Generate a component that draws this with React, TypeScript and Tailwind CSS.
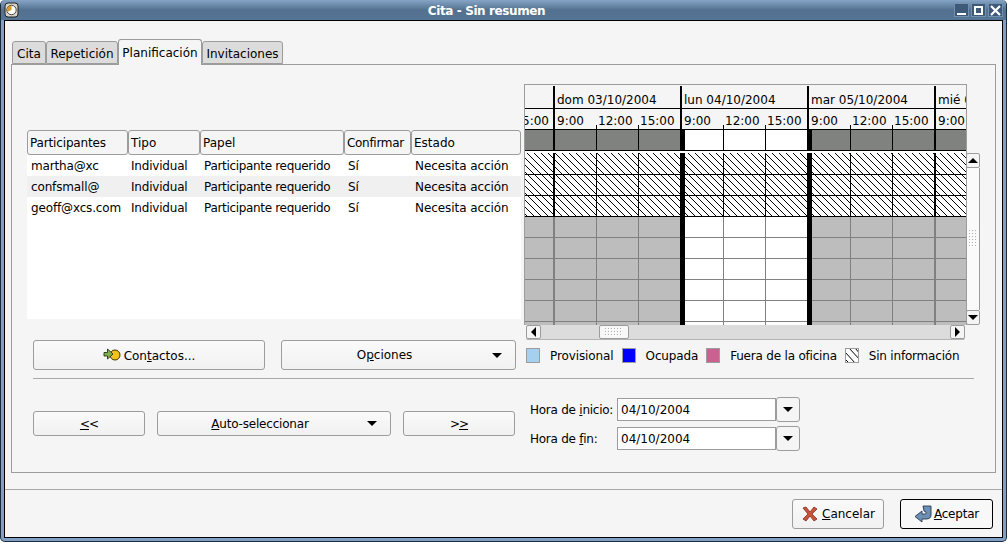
const rows = [
  { name: "martha@xc", bg: "bg-white" },
  { name: "confsmall@", bg: "bg-[#f0f0f0]" },
  { name: "geoff@xcs.com", bg: "bg-white" },
];

const Arrow = ({ dir = "down" }: { dir?: "down" | "up" | "left" | "right" }) => {
  const points = {
    down: "0,0 10,0 5,5",
    up: "0,5 10,5 5,0",
    left: "5,0 5,10 0,5",
    right: "0,0 0,10 5,5",
  }[dir];
  const vertical = dir === "down" || dir === "up";
  return (
    <svg width={vertical ? 10 : 5} height={vertical ? 5 : 10} className="shrink-0">
      <polygon points={points} fill="#000" />
    </svg>
  );
};

const Dots = ({ vertical = false }: { vertical?: boolean }) => (
  <svg width={vertical ? 8 : 18} height={vertical ? 18 : 8}>
    <defs>
      <pattern id={vertical ? "dv" : "dh"} width="3" height="3" patternUnits="userSpaceOnUse">
        <rect x="0" y="0" width="1" height="1" fill="#b0b0b0" />
        <rect x="1" y="1" width="1" height="1" fill="#ffffff" />
      </pattern>
    </defs>
    <rect width="100%" height="100%" fill={`url(#${vertical ? "dv" : "dh"})`} />
  </svg>
);

const Button = ({ className, children }: { className: string; children: React.ReactNode }) => (
  <div
    className={`flex items-center rounded-[3px] border border-[#9c9c9c] bg-gradient-to-b from-[#fafafa] to-[#f1f1f1] ${className}`}
  >
    {children}
  </div>
);

// chart body below the two header rows
const GanttBody = () => {
  const hourLines = [596, 638, 723, 765, 850, 892].map((x) => x - 525);
  const rowsY = [237, 258, 279, 300, 321].map((y) => y - 130);
  return (
    <svg width="441" height="195" className="block">
      <defs>
        <pattern id="hatch" width="7" height="7" patternUnits="userSpaceOnUse">
          <g fill="#000">
            {[0, 1, 2, 3, 4, 5, 6].map((i) => (
              <rect key={i} x={i} y={i} width="1" height="1" />
            ))}
          </g>
        </pattern>
      </defs>
      <rect width="441" height="195" fill="#fff" />
      {/* busy row */}
      <rect x="0" y="0" width="157" height="20" fill="#7f827e" />
      <rect x="282" y="0" width="159" height="20" fill="#7f827e" />
      <rect x="0" y="20" width="441" height="1" fill="#000" />
      {/* out of range */}
      <rect x="0" y="87" width="157" height="108" fill="#bdbdbd" />
      <rect x="282" y="87" width="159" height="108" fill="#bdbdbd" />
      {rowsY.map((y) => (
        <rect key={y} x="0" y={y} width="441" height="1" fill="#808080" />
      ))}
      {[28, 409].map((x) => (
        <rect key={x} x={x} y="87" width="2" height="108" fill="#808080" />
      ))}
      {hourLines.map((x) => (
        <rect key={x} x={x} y="87" width="1" height="108" fill="#808080" />
      ))}
      {/* hatched rows */}
      <rect x="0" y="23" width="441" height="64" fill="#fff" />
      <rect x="0" y="23" width="441" height="64" fill="url(#hatch)" />
      {[44, 65, 86].map((y) => (
        <rect key={y} x="0" y={y} width="441" height="1" fill="#000" />
      ))}
      {hourLines.map((x) => (
        <g key={x}>
          <rect x={x} y="0" width="1" height="21" fill="#000" />
          <rect x={x} y="23" width="1" height="64" fill="#000" />
        </g>
      ))}
      {[28, 409].map((x) => (
        <g key={x}>
          <rect x={x} y="0" width="2" height="21" fill="#000" />
          <rect x={x} y="23" width="2" height="64" fill="#000" />
        </g>
      ))}
      {[155, 282].map((x) => (
        <g key={x}>
          <rect x={x} y="0" width="5" height="21" fill="#000" />
          <rect x={x} y="23" width="5" height="172" fill="#000" />
        </g>
      ))}
    </svg>
  );
};

const HourCell = ({ label, w, tick = true }: { label: string; w: string; tick?: boolean }) => (
  <div className={`relative h-full whitespace-nowrap pl-[2px] pt-[5px] ${w}`}>
    {tick && <span className="absolute bottom-0 left-0 h-[4px] w-px bg-black" />}
    {label}
  </div>
);

const DayColumn = ({ label, wide = false }: { label: string; wide?: boolean }) => (
  <div className={`shrink-0 border-l-2 border-black ${wide ? "w-[127px]" : "w-[40px]"}`}>
    <div className="h-[23px] overflow-hidden whitespace-nowrap border-b border-black bg-[#f5f5f5] pl-[2px] pt-[7px]">
      {label}
    </div>
    <div className="flex h-[20px] overflow-hidden">
      <HourCell label="9:00" w={wide ? "w-[41px]" : "w-[31px]"} tick={false} />
      {wide && <HourCell label="12:00" w="w-[42px]" />}
      {wide && <HourCell label="15:00" w="w-[42px]" />}
    </div>
  </div>
);

const Swatch = ({ color }: { color: string }) => (
  <span className={`block h-[15px] w-[14px] border border-[#9c9c9c] ${color}`} />
);

export default function App() {
  return (
    <div className="h-[544px] w-[1007px] overflow-hidden bg-white font-['DejaVu_Sans',sans-serif] text-[12px] leading-[14px] text-black">
      <div className="flex h-[542px] flex-col overflow-hidden rounded-[5px] border border-t-0 border-[#1c2c3c] bg-[#7f9fc4]">
        {/* title bar */}
        <div className="-mx-px flex h-[20px] shrink-0 items-center bg-gradient-to-b from-[#86a4c6] via-[#53718f] to-[#557594] pl-[4px] pr-[4px]">
          <svg width="15" height="16" viewBox="0 0 15 16">
            <rect x="1" y="1" width="13" height="14" rx="3" fill="#d8d4c8" stroke="#222" />
            <circle cx="7.5" cy="8" r="4.7" fill="#fff" stroke="#444" />
            <path d="M7.5,8 L7.5,3.4 A4.6,4.6 0 0 0 3.4,10 Z" fill="#d99a20" />
          </svg>
          <div className="flex-1 pt-[1px] text-center font-bold tracking-[-0.4px] text-white">Cita - Sin resumen</div>
          <div className="flex gap-[2px]">
            <div className="flex h-[14px] w-[15px] items-end justify-center border border-[#7390ae] bg-[#3f5a78] pb-[1px]">
              <span className="block h-[2px] w-[9px] bg-white" />
            </div>
            <div className="flex h-[14px] w-[15px] items-center justify-center border border-[#7390ae] bg-[#3f5a78]">
              <span className="block h-[9px] w-[9px] border-[2px] border-white" />
            </div>
            <div className="flex h-[14px] w-[15px] items-center justify-center border border-[#7390ae] bg-[#3f5a78]">
              <svg width="11" height="11">
                <path d="M1,1 L10,10 M10,1 L1,10" stroke="#fff" strokeWidth="2.2" />
              </svg>
            </div>
          </div>
        </div>

        {/* window frame */}
        <div className="flex flex-1 flex-col px-[3px] pb-[3px]">
          <div className="flex flex-1 flex-col border border-black bg-[#f5f5f5]">
            {/* tabs */}
            <div className="ml-[7px] mr-[6px] mt-[17px] flex h-[26px] shrink-0 items-end">
              {[
                ["Cita", "w-[34px]"],
                ["Repetición", "w-[72px]"],
              ].map(([t, w]) => (
                <div
                  key={t}
                  className={`flex h-[23px] items-center justify-center rounded-t-[3px] border border-[#9c9c9c] bg-[#dcdcdc] pt-[2px] ${w}`}
                >
                  {t}
                </div>
              ))}
              <div className="z-10 -mb-px flex h-[26px] w-[84px] items-start justify-center rounded-t-[3px] border border-b-0 border-[#9c9c9c] bg-[#f5f5f5] pt-[6px]">
                Planificación
              </div>
              <div className="flex h-[23px] w-[81px] items-center justify-center rounded-t-[3px] border border-[#9c9c9c] bg-[#dcdcdc] pt-[2px]">
                Invitaciones
              </div>
            </div>

            {/* notebook panel */}
            <div className="ml-[6px] mr-[6px] h-[409px] shrink-0 border border-[#9c9c9c] pl-[15px] pt-[19px]">
              <div className="flex h-[241px] items-start">
                {/* participants */}
                <div className="mt-[46px] h-[189px] w-[494px] shrink-0 bg-white">
                  <div className="flex h-[25px] bg-[#f5f5f5]">
                    {[
                      ["Participantes", "w-[101px]", "tracking-[-0.15px]"],
                      ["Tipo", "w-[72px]", ""],
                      ["Papel", "w-[144px]", ""],
                      ["Confirmar", "w-[67px]", "tracking-[-0.3px]"],
                      ["Estado", "w-[110px]", ""],
                    ].map(([t, w, k]) => (
                      <div
                        key={t}
                        className={`flex items-center rounded-[3px] border border-[#9c9c9c] pl-[2px] ${w} ${k}`}
                      >
                        {t}
                      </div>
                    ))}
                  </div>
                  {rows.map((r) => (
                    <div key={r.name} className={`flex h-[21px] items-center ${r.bg}`}>
                      <div className="w-[100px] pl-[4px] tracking-[-0.15px]">{r.name}</div>
                      <div className="w-[73px] pl-[4px] tracking-[-0.2px]">Individual</div>
                      <div className="w-[144px] pl-[4px] tracking-[-0.32px]">Participante requerido</div>
                      <div className="w-[67px] pl-[4px]">Sí</div>
                      <div className="w-[110px] pl-[4px] tracking-[-0.07px]">Necesita acción</div>
                    </div>
                  ))}
                </div>

                {/* gantt */}
                <div className="ml-[3px] w-[443px] shrink-0 border border-b-0 border-[#9c9c9c] bg-[#f5f5f5]">
                  <div className="flex h-[45px] w-[441px] items-stretch overflow-hidden border-b border-black pt-[1px]">
                    <div className="w-[28px] shrink-0">
                      <div className="h-[23px] border-b border-black" />
                      <div className="flex justify-end overflow-hidden whitespace-nowrap pr-[4px] pt-[5px]">5:00</div>
                    </div>
                    <DayColumn label="dom 03/10/2004" wide />
                    <DayColumn label="lun 04/10/2004" wide />
                    <DayColumn label="mar 05/10/2004" wide />
                    <DayColumn label="mié 06/10/2004" />
                  </div>
                  <GanttBody />
                </div>

                {/* vertical scrollbar */}
                <div className="-ml-[1px] mt-[69px] flex h-[172px] w-[14px] shrink-0 flex-col">
                  <div className="flex h-[15px] shrink-0 items-center justify-center rounded-[2px] border border-[#9c9c9c] bg-[#f5f5f5]">
                    <Arrow dir="up" />
                  </div>
                  <div className="flex flex-1 items-center justify-center border-x border-[#9c9c9c] bg-[#fafafa]">
                    <Dots vertical />
                  </div>
                  <div className="flex h-[15px] shrink-0 items-center justify-center rounded-[2px] border border-[#9c9c9c] bg-[#f5f5f5]">
                    <Arrow dir="down" />
                  </div>
                </div>
              </div>

              {/* horizontal scrollbar */}
              <div className="ml-[499px] flex h-[15px] w-[439px] items-stretch rounded-[2px] border-b border-[#b4b4b4] bg-[#dcdcdc]">
                <div className="flex w-[15px] items-center justify-center rounded-[2px] border border-[#9c9c9c] bg-[#f5f5f5]">
                  <Arrow dir="left" />
                </div>
                <div className="ml-[58px] flex w-[30px] items-center justify-center rounded-[2px] border border-[#9c9c9c] bg-[#f8f8f8]">
                  <Dots />
                </div>
                <div className="flex-1" />
                <div className="flex w-[15px] items-center justify-center rounded-[2px] border border-[#9c9c9c] bg-[#f5f5f5]">
                  <Arrow dir="right" />
                </div>
              </div>

              {/* contactos / opciones / legend */}
              <div className="flex h-[30px] items-center">
                <Button className="ml-[6px] h-[30px] w-[232px] justify-center">
                  <svg width="18" height="14" viewBox="0 0 18 14" className="mr-[3px]">
                    <circle cx="12" cy="7" r="5" fill="#f2c21c" stroke="#3a3000" />
                    <path d="M1,4.5 L4.5,4.5 L4.5,1 L10,6 L4.5,11 L4.5,8 L1,8 Z" fill="#7fb04a" stroke="#22331a" strokeWidth="0.9" />
                  </svg>
                  <span className="pt-[1px]">
                    Con<u>t</u>actos...
                  </span>
                </Button>
                <Button className="relative ml-[16px] h-[30px] w-[235px] justify-center">
                  <span className="pr-[28px]">
                    O<u>p</u>ciones
                  </span>
                  <span className="absolute right-[13px] top-[12px]">
                    <Arrow />
                  </span>
                </Button>
                <div className="ml-[10px] flex items-center pt-[1px]">
                  <Swatch color="bg-[#a5d0f0]" />
                  <span className="ml-[10px] tracking-[-0.1px]">Provisional</span>
                  <span className="ml-[8px]">
                    <Swatch color="bg-[#0000ff]" />
                  </span>
                  <span className="ml-[10px] tracking-[-0.15px]">Ocupada</span>
                  <span className="ml-[8px]">
                    <Swatch color="bg-[#cc6090]" />
                  </span>
                  <span className="ml-[10px] tracking-[-0.2px]">Fuera de la oficina</span>
                  <svg width="14" height="15" className="ml-[8px] shrink-0 border border-[#9c9c9c] bg-white">
                    <path d="M-1,3 L10,15 M3,-1 L15,12 M-2,9 L4,15 M9,-1 L15,6" stroke="#000" strokeWidth="1" />
                  </svg>
                  <span className="ml-[10px] tracking-[-0.2px]">Sin información</span>
                </div>
              </div>

              <div className="ml-[6px] mt-[8px] h-px w-[941px] bg-[#a8a8a8]" />

              {/* navigation and times */}
              <div className="flex h-[74px] items-start pl-[6px]">
                <div className="mt-[32px] flex gap-[12px]">
                  <Button className="h-[25px] w-[112px] justify-center">
                    <span className="tracking-[-1px]">
                      <u>&lt;</u>&lt;
                    </span>
                  </Button>
                  <Button className="relative h-[25px] w-[234px] justify-center">
                    <span className="pr-[28px] tracking-[-0.2px]">
                      <u>A</u>uto-seleccionar
                    </span>
                    <span className="absolute right-[13px] top-[9px]">
                      <Arrow />
                    </span>
                  </Button>
                  <Button className="h-[25px] w-[112px] justify-center">
                    <span className="tracking-[-1px]">
                      &gt;<u>&gt;</u>
                    </span>
                  </Button>
                </div>
                <div className="ml-[15px] mt-[18px] flex flex-col gap-[4px]">
                  {[
                    ["Hora de ", "i", "nicio:"],
                    ["Hora de ", "f", "in:"],
                  ].map(([a, b, c]) => (
                    <div key={c} className="flex h-[25px] items-center">
                      <div className="w-[87px] whitespace-pre tracking-[-0.25px]">
                        {a}
                        <u>{b}</u>
                        {c}
                      </div>
                      <div className="flex h-[23px] w-[159px] items-center border border-[#9c9c9c] bg-white pl-[3px]">
                        04/10/2004
                      </div>
                      <div className="flex h-[25px] w-[24px] items-center justify-center rounded-[3px] border border-[#9c9c9c] bg-[#f5f5f5]">
                        <Arrow />
                      </div>
                    </div>
                  ))}
                </div>
              </div>
            </div>

            <div className="mt-[16px] h-px shrink-0 bg-[#a8a8a8]" />

            {/* dialog actions */}
            <div className="flex flex-1 items-start justify-end pr-[9px] pt-[9px]">
              <Button className="h-[30px] w-[92px] justify-center">
                <svg width="18" height="16" viewBox="0 0 18 16" className="mr-[3px]">
                  <path d="M2,2 L5,1 L9,6 L13,1 L16,3 L11,8 L16,13 L13,15 L9,10 L5,15 L2,13 L7,8 Z" fill="#c8553a" stroke="#8a2a1a" strokeWidth="0.8" />
                </svg>
                <span>
                  <u>C</u>ancelar
                </span>
              </Button>
              <div className="ml-[16px] flex h-[30px] w-[93px] items-center justify-center rounded-[3px] border border-black bg-[#f8f8f8]">
                <svg width="20" height="18" viewBox="0 0 20 18">
                  <path d="M9,1 L17,1 L17,10 C17,13 15,14 12,14 L8,14 L8,17 L1,11.5 L8,6 L8,9 L11,9 C12,9 12,8 12,7 L10,6 Z" fill="#6d8fb5" stroke="#26384c" strokeWidth="0.9" />
                </svg>
                <span className="tracking-[-0.2px]">
                  <u>A</u>ceptar
                </span>
              </div>
            </div>
          </div>
        </div>
      </div>
    </div>
  );
}
